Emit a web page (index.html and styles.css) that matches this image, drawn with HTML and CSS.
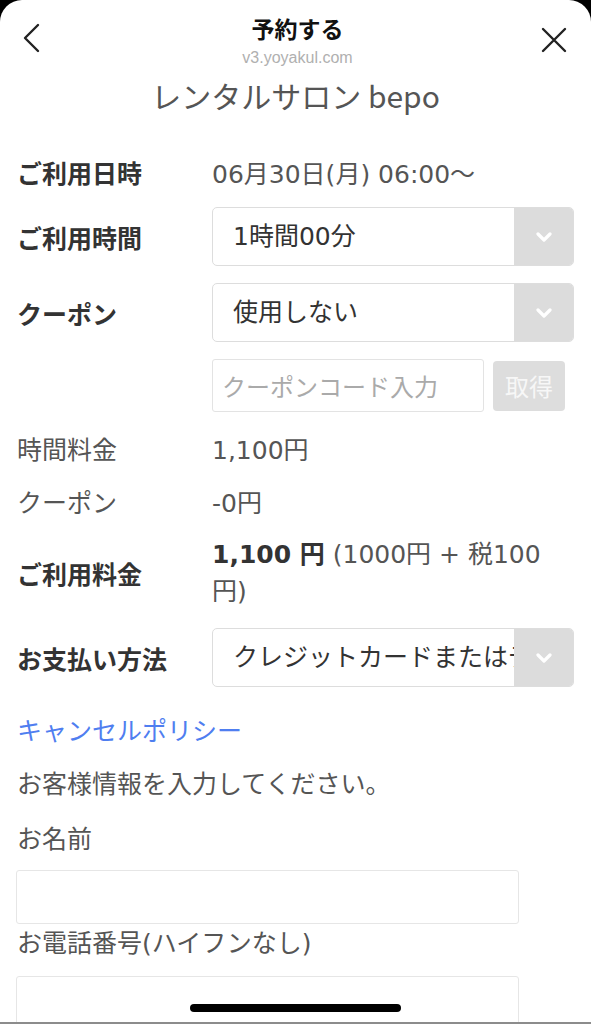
FILE: index.html
```html
<!DOCTYPE html>
<html lang="ja">
<head>
    <meta charset="UTF-8">
    <meta name="viewport" content="width=device-width, initial-scale=1.0">
    <title>予約する</title>
    <link rel="stylesheet" href="styles.css">
</head>
<body>
    <div class="sheet">
        <header class="topbar">
            <a href="#" class="icon-btn back">
                <svg width="20" height="30" viewBox="0 0 20 30"><polyline points="16,2 3,15 16,28" fill="none" stroke="#222" stroke-width="2.4" stroke-linecap="round" stroke-linejoin="round"/></svg>
            </a>
            <div class="topbar-title">
                <h1>予約する</h1>
                <p class="domain">v3.yoyakul.com</p>
            </div>
            <a href="#" class="icon-btn close">
                <svg width="26" height="26" viewBox="0 0 26 26"><path d="M2 2 L24 24 M24 2 L2 24" fill="none" stroke="#222" stroke-width="2.4" stroke-linecap="round"/></svg>
            </a>
        </header>

        <h2 class="shop-name">レンタルサロン bepo</h2>

        <div class="form">
            <div class="row row-date">
                <div class="label strong">ご利用日時</div>
                <div class="value">06月30日(月) 06:00〜</div>
            </div>
            <div class="row row-select">
                <div class="label strong">ご利用時間</div>
                <div class="select">
                    <span class="select-text">1時間00分</span>
                    <span class="select-arrow"><svg width="16" height="10" viewBox="0 0 16 10"><polyline points="2,2 8,8 14,2" fill="none" stroke="#fff" stroke-width="3.2" stroke-linecap="round" stroke-linejoin="round"/></svg></span>
                </div>
            </div>
            <div class="row row-select">
                <div class="label strong">クーポン</div>
                <div class="select">
                    <span class="select-text">使用しない</span>
                    <span class="select-arrow"><svg width="16" height="10" viewBox="0 0 16 10"><polyline points="2,2 8,8 14,2" fill="none" stroke="#fff" stroke-width="3.2" stroke-linecap="round" stroke-linejoin="round"/></svg></span>
                </div>
            </div>
            <div class="row row-coupon">
                <div class="label"></div>
                <div class="coupon">
                    <input class="coupon-input" type="text" placeholder="クーポンコード入力">
                    <button class="coupon-btn" type="button">取得</button>
                </div>
            </div>
            <div class="row row-price">
                <div class="label">時間料金</div>
                <div class="value">1,100円</div>
            </div>
            <div class="row row-discount">
                <div class="label">クーポン</div>
                <div class="value">-0円</div>
            </div>
            <div class="row row-total">
                <div class="label strong">ご利用料金</div>
                <div class="value total"><b>1,100 円</b> (1000円 + 税100円)</div>
            </div>
            <div class="row row-select row-pay">
                <div class="label strong">お支払い方法</div>
                <div class="select">
                    <span class="select-text">クレジットカードまたはデビットカード</span>
                    <span class="select-arrow"><svg width="16" height="10" viewBox="0 0 16 10"><polyline points="2,2 8,8 14,2" fill="none" stroke="#fff" stroke-width="3.2" stroke-linecap="round" stroke-linejoin="round"/></svg></span>
                </div>
            </div>
        </div>

        <a href="#" class="policy">キャンセルポリシー</a>
        <p class="intro">お客様情報を入力してください。</p>

        <label class="field-label name-label">お名前</label>
        <input class="field name-field" type="text">
        <label class="field-label tel-label">お電話番号(ハイフンなし)</label>
        <input class="field tel-field" type="tel">
    </div>

    <div class="home-bar"></div>
    <div class="bottom-line"></div>
</body>
</html>
```

FILE: styles.css
```css
html, body {
    margin: 0;
    padding: 0;
    background-color: #000;
    height: 1024px;
    overflow: hidden;
}
body {
    font-family: "DejaVu Sans", "Noto Sans CJK JP", sans-serif;
    color: #555;
}
.sheet {
    background-color: #fff;
    border-radius: 22px 22px 0 0;
    height: 1024px;
    box-sizing: border-box;
    padding: 0 17px;
}
.topbar {
    display: grid;
    grid-template-columns: 1fr auto 1fr;
    align-items: start;
    padding-top: 12px;
    height: 56px;
}
.icon-btn {
    display: block;
}
.back {
    justify-self: start;
    margin-left: 5px;
    margin-top: 11px;
}
.close {
    justify-self: end;
    margin-right: 7px;
    margin-top: 15px;
}
.topbar-title {
    text-align: center;
    padding-left: 4px;
}
.topbar-title h1 {
    margin: 0;
    font-family: "Noto Sans CJK JP", sans-serif;
    font-size: 23px;
    line-height: 32px;
    font-weight: 700;
    color: #111;
}
.domain {
    margin: 3px 0 0;
    font-family: "Liberation Sans", Arial, sans-serif;
    font-size: 16px;
    line-height: 22px;
    color: #b0b0b0;
}
.shop-name {
    margin: 7px 0 0;
    text-align: center;
    font-family: "Noto Sans CJK JP", sans-serif;
    font-size: 30px;
    line-height: 40px;
    font-weight: 400;
    color: #555;
}
.form {
    margin-top: 35px;
}
.row {
    display: flex;
    align-items: center;
}
.label {
    width: 195px;
    flex-shrink: 0;
    font-size: 25px;
    color: #555;
}
.label.strong {
    font-weight: 700;
    color: #333;
}
.value {
    font-size: 25px;
    color: #555;
}
.row-date {
    height: 44px;
}
.row-select {
    margin-top: 13px;
}
.row-select + .row-select {
    margin-top: 17px;
}
.select {
    flex: 1;
    display: flex;
    height: 59px;
    border: 1px solid #ddd;
    border-radius: 5px;
    box-sizing: border-box;
    overflow: hidden;
}
.select-text {
    flex: 1;
    padding-left: 20px;
    font-size: 25px;
    line-height: 57px;
    color: #333;
    white-space: nowrap;
    overflow: hidden;
}
.select-arrow {
    width: 59px;
    flex-shrink: 0;
    background-color: #dcdcdc;
    display: flex;
    align-items: center;
    justify-content: center;
}
.row-coupon {
    margin-top: 17px;
}
.coupon {
    display: flex;
    align-items: center;
    gap: 9px;
}
.coupon-input {
    width: 272px;
    height: 53px;
    box-sizing: border-box;
    border: 1px solid #e3e3e3;
    border-radius: 3px;
    padding: 0 9px;
    font-family: "Noto Sans CJK JP", sans-serif;
    font-size: 24px;
    outline: none;
}
.coupon-input::placeholder {
    color: #aaa;
}
.coupon-btn {
    width: 72px;
    height: 50px;
    border: none;
    border-radius: 4px;
    background-color: #ddd;
    color: #f7f7f7;
    font-family: "Noto Sans CJK JP", sans-serif;
    font-size: 24px;
    padding: 0;
}
.row-price {
    margin-top: 14px;
    height: 44px;
}
.row-discount {
    margin-top: 9px;
    height: 44px;
}
.row-total {
    margin-top: 13px;
}
.total {
    flex: 1;
    line-height: 37px;
}
.total b {
    color: #333;
}
.row-pay {
    margin-top: 18px;
}
.policy {
    display: block;
    margin-top: 30px;
    font-size: 25px;
    line-height: 30px;
    color: #4f7ef0;
    text-decoration: none;
}
.intro {
    margin: 23px 0 0;
    font-size: 25px;
    line-height: 30px;
}
.field-label {
    display: block;
    font-size: 25px;
    line-height: 30px;
    color: #555;
}
.name-label {
    margin-top: 25px;
}
.tel-label {
    margin-top: 5px;
}
.field {
    display: block;
    width: 503px;
    height: 54px;
    margin-left: -1px;
    box-sizing: border-box;
    border: 1px solid #e6e6e6;
    border-radius: 3px;
    outline: none;
}
.name-field {
    margin-top: 15px;
}
.tel-field {
    margin-top: 17px;
}
.home-bar {
    position: fixed;
    left: 190px;
    bottom: 12px;
    width: 211px;
    height: 8px;
    border-radius: 4px;
    background-color: #000;
}
.bottom-line {
    position: fixed;
    left: 0;
    right: 0;
    bottom: 0;
    height: 2px;
    background-color: #8c8c8c;
}
```
